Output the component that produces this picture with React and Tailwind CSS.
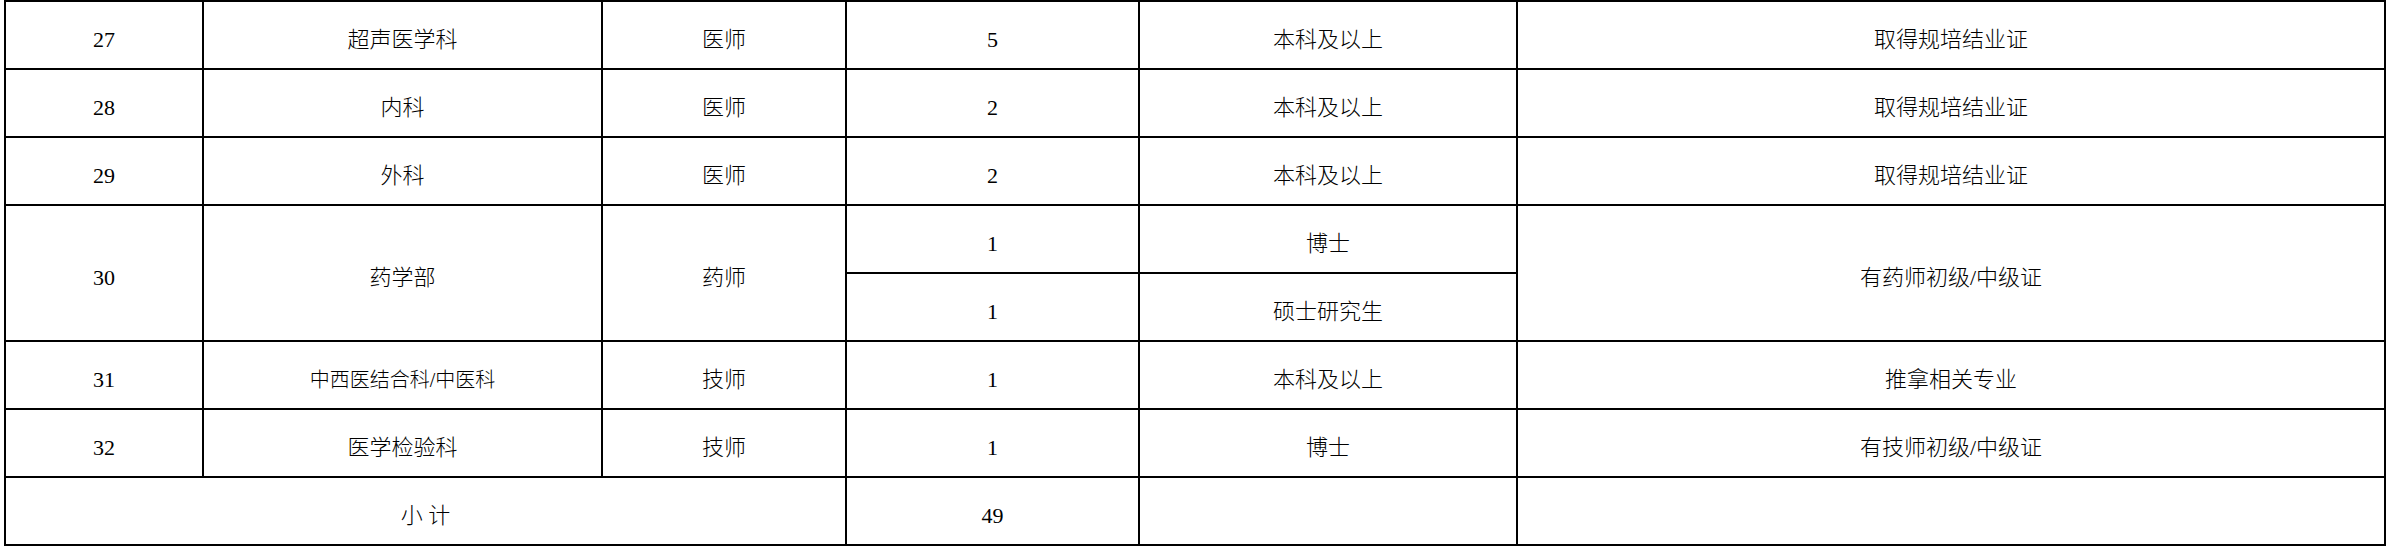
const rows = [
    { no: '27', dept: '超声医学科', post: '医师', num: '5', edu: '本科及以上', req: '取得规培结业证' },
    { no: '28', dept: '内科', post: '医师', num: '2', edu: '本科及以上', req: '取得规培结业证' },
    { no: '29', dept: '外科', post: '医师', num: '2', edu: '本科及以上', req: '取得规培结业证' },
];

// numbers keep the regular serif weight, Chinese text uses the light CJK face
const num = 'border-2 border-black text-center align-middle pt-[10px] leading-[30px] text-[22px] font-normal';
const cell = 'border-2 border-black text-center align-middle pt-[10px] leading-[30px] text-[22px] font-light';

export default function App() {
    return (
        <div className="w-[2390px] h-[552px] bg-white text-black font-['Liberation_Serif','Noto_Sans_CJK_SC',serif]">
            <table className="ml-[4px] w-[2380px] table-fixed border-collapse">
                <colgroup>
                    <col className="w-[198px]" />
                    <col className="w-[399px]" />
                    <col className="w-[244px]" />
                    <col className="w-[293px]" />
                    <col className="w-[378px]" />
                    <col className="w-[868px]" />
                </colgroup>
                <tbody>
                    {rows.map((r) => (
                        <tr key={r.no} className="h-[68px]">
                            <td className={num}>{r.no}</td>
                            <td className={cell}>{r.dept}</td>
                            <td className={cell}>{r.post}</td>
                            <td className={num}>{r.num}</td>
                            <td className={cell}>{r.edu}</td>
                            <td className={cell}>{r.req}</td>
                        </tr>
                    ))}

                    {/* 药学部 spans two rows */}
                    <tr className="h-[68px]">
                        <td rowSpan={2} className={num}>30</td>
                        <td rowSpan={2} className={cell}>药学部</td>
                        <td rowSpan={2} className={cell}>药师</td>
                        <td className={num}>1</td>
                        <td className={cell}>博士</td>
                        <td rowSpan={2} className={cell}>有药师初级/中级证</td>
                    </tr>
                    <tr className="h-[68px]">
                        <td className={num}>1</td>
                        <td className={cell}>硕士研究生</td>
                    </tr>

                    <tr className="h-[68px]">
                        <td className={num}>31</td>
                        <td className="border-2 border-black text-center align-middle pt-[10px] leading-[30px] text-[20px] font-light">中西医结合科/中医科</td>
                        <td className={cell}>技师</td>
                        <td className={num}>1</td>
                        <td className={cell}>本科及以上</td>
                        <td className={cell}>推拿相关专业</td>
                    </tr>
                    <tr className="h-[68px]">
                        <td className={num}>32</td>
                        <td className={cell}>医学检验科</td>
                        <td className={cell}>技师</td>
                        <td className={num}>1</td>
                        <td className={cell}>博士</td>
                        <td className={cell}>有技师初级/中级证</td>
                    </tr>

                    {/* 小计 */}
                    <tr className="h-[68px]">
                        <td colSpan={3} className={cell}>小 计</td>
                        <td className={num}>49</td>
                        <td className={cell}></td>
                        <td className={cell}></td>
                    </tr>
                </tbody>
            </table>
        </div>
    );
}
